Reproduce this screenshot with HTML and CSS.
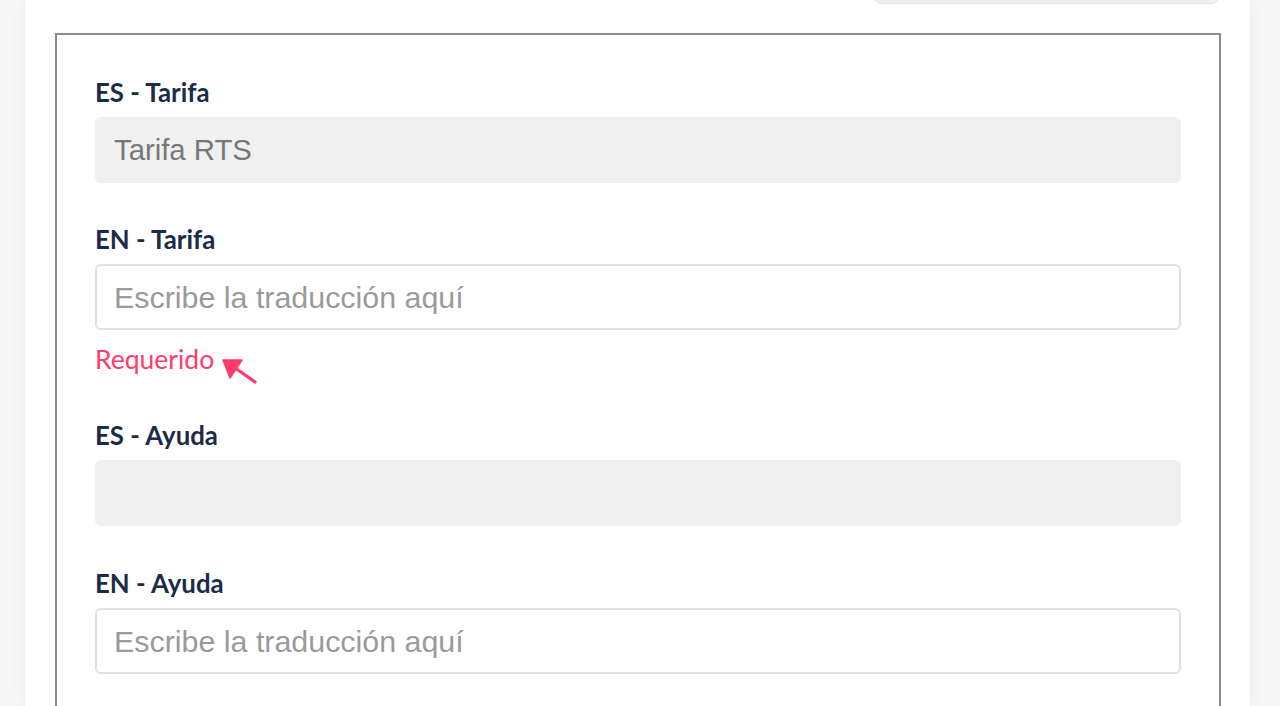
FILE: index.html
```html
<!DOCTYPE html>
<html lang="es">
<head>
<meta charset="utf-8">
<title>Traducciones</title>
<link rel="stylesheet" href="styles.css">
</head>
<body>
<div class="page">
  <div class="card">
    <div class="top-row"><div class="top-field"></div></div>
    <div class="box">
      <div class="field">
        <label class="label">ES - Tarifa</label>
        <div class="input disabled">Tarifa RTS</div>
      </div>
      <div class="field has-error">
        <label class="label">EN - Tarifa</label>
        <div class="input placeholder">Escribe la traducción aquí</div>
        <div class="error">Requerido
          <svg class="arrow" width="40" height="30" viewBox="0 0 40 30"><line x1="9" y1="7" x2="33" y2="24" stroke="#ff3b6b" stroke-width="3.2" stroke-linecap="round"/><polygon points="1,2 20,2 8,20" fill="#ff3b6b" stroke="#ff3b6b" stroke-width="1.5" stroke-linejoin="round"/></svg>
        </div>
      </div>
      <div class="field spaced">
        <label class="label">ES - Ayuda</label>
        <div class="input disabled"></div>
      </div>
      <div class="field">
        <label class="label">EN - Ayuda</label>
        <div class="input placeholder">Escribe la traducción aquí</div>
      </div>
    </div>
  </div>
</div>
</body>
</html>
```
FILE: styles.css
```css
html, body {
  margin: 0;
  padding: 0;
  height: 100%;
  overflow: hidden;
}
body {
  background: #f7f7f7;
  font-family: Lato, "Liberation Sans", sans-serif;
}
.page {
  padding: 0 30px 0 25px;
  height: 100%;
}
.card {
  background: #fff;
  height: 100%;
  padding: 0 29px 0 30px;
  box-shadow: 0 0 18px rgba(0, 0, 0, 0.05);
}
.top-row {
  display: flex;
  justify-content: flex-end;
  padding-right: 3px;
}
.top-field {
  width: 341px;
  height: 40px;
  margin-top: -38px;
  background: #efefef;
  border: 1px solid #e4e4e4;
  border-radius: 6px;
}
.box {
  margin-top: 29px;
  border: 2px solid #8c8c8c;
  border-bottom: none;
  padding: 42px 38px 0 38px;
  height: 800px;
}
.field {
  margin-bottom: 41px;
}
.field.has-error {
  margin-bottom: 46px;
}
.field.spaced {
  margin-bottom: 42px;
}
.label {
  display: block;
  font-family: Lato, sans-serif;
  font-weight: 700;
  font-size: 25.8px;
  line-height: 30px;
  color: #1b2b48;
  margin-bottom: 10px;
}
.input {
  box-sizing: border-box;
  height: 66px;
  border: 2px solid #e0e0e0;
  border-radius: 6px;
  padding: 0 17px;
  display: flex;
  align-items: center;
  font-family: "Liberation Sans", Arial, sans-serif;
  font-size: 29.3px;
  background: #fff;
}
.input.disabled {
  background: #f0f0f0;
  border-color: #f0f0f0;
  color: #777;
}
.input.placeholder {
  color: #9a9a9a;
  font-size: 30.4px;
}
.error {
  margin-top: 14px;
  font-family: Lato, sans-serif;
  font-size: 26.5px;
  line-height: 30px;
  color: #ff3b6b;
  position: relative;
}
.arrow {
  position: absolute;
  left: 127px;
  top: 14px;
}
```
